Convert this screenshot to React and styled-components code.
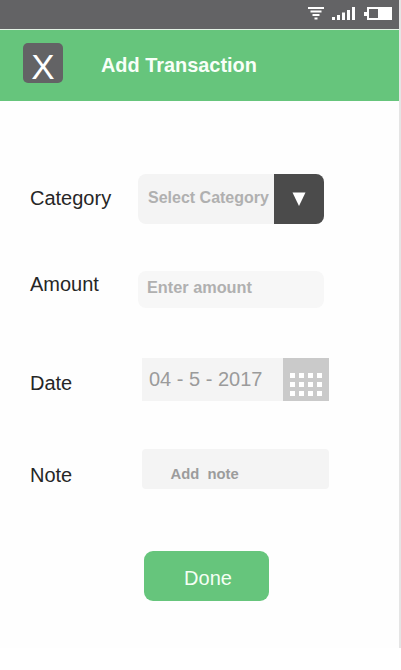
import React from "react";
import styled, { createGlobalStyle } from "styled-components";

const GlobalStyle = createGlobalStyle`
  * { box-sizing: border-box; }
  body { margin: 0; background: #fff; font-family: "Liberation Sans", Arial, sans-serif; }
  button, input { font: inherit; border: 0; padding: 0; margin: 0; }
`;

const Screen = styled.main`
  width: 401px;
  height: 648px;
  border-right: 2px solid #e5e5e5;
  background: #fefefe;
  overflow: hidden;
`;

const StatusBar = styled.div`
  height: 29px;
  background: #636365;
  display: flex;
  justify-content: flex-end;
  padding-right: 6px;
`;

const Header = styled.header`
  height: 72px;
  border-top: 1px solid #e4f3e6;
  background: #66c57c;
  display: flex;
  align-items: flex-start;
  padding: 13px 0 0 23px;
`;

const CloseButton = styled.button`
  width: 40px;
  height: 40px;
  border-radius: 5px;
  background: #636365;
  color: #fff;
  font-size: 35px;
  line-height: 47px;
  text-align: center;
`;

const Title = styled.h1`
  margin: 10px 0 0 38px;
  font-size: 19.9px;
  line-height: 24px;
  font-weight: bold;
  color: #f8fff8;
  white-space: nowrap;
`;

const Form = styled.form`
  padding: 73px 0 0 30px;
`;

const Row = styled.div`
  display: flex;
  align-items: flex-start;
  height: ${(p) => p.$height}px;
  margin-bottom: ${(p) => p.$gap}px;
`;

const Label = styled.label`
  width: ${(p) => p.$width || 112}px;
  padding-top: ${(p) => p.$top}px;
  font-size: 20px;
  line-height: 24px;
  color: #262626;
`;

const Field = styled.div`
  display: flex;
  width: ${(p) => p.$width}px;
  height: 100%;
  border-radius: ${(p) => p.$radius || 0}px;
  background: ${(p) => p.$bg || "#f4f4f4"};
  overflow: hidden;
`;

const Value = styled.span`
  flex: 1;
  min-width: 0;
  padding: ${(p) => p.$top}px 0 0 ${(p) => p.$left}px;
  font-size: ${(p) => p.$size || 16}px;
  font-weight: ${(p) => (p.$regular ? 400 : 700)};
  line-height: 20px;
  color: ${(p) => p.$color || "#b0b0b0"};
  white-space: pre;
`;

const DropButton = styled.button`
  width: 50px;
  background: #4b4b4b;
  display: flex;
  align-items: center;
  justify-content: center;
`;

const CalendarButton = styled.button`
  width: 46px;
  background: #cacaca;
  padding: 15px 0 0 7px;
  display: grid;
  grid-template-columns: repeat(4, 5px);
  grid-auto-rows: 5px;
  gap: 4px;
`;

const Day = styled.span`
  background: #fff;
`;

const DoneButton = styled.button`
  display: block;
  width: 125px;
  height: 50px;
  margin-left: 114px;
  padding: 5px 0 0 3px;
  border-radius: 9px;
  background: #66c57c;
  color: #f4fff4;
  font-size: 20px;
`;

function StatusIcons() {
  return (
    <svg width="86" height="29" viewBox="307 0 86 29" fill="#fff">
      <path d="M308 7h16v2h-16zM310.500 10.500h11v2h-11zM312.500 14h7v2h-7zM314.500 17.500h3v2h-3z" />
      <path d="M332 17h3v3h-3zM337 15h3v5h-3zM342 12.500h3v7.500h-3zM347 10h3v10h-3zM352 7h3v13h-3z" />
      <path fillRule="evenodd" d="M367 7h25v13h-25v-4h-3v-4h3zM369 9v9h9v-9z" />
    </svg>
  );
}

export default function App() {
  return (
    <>
      <GlobalStyle />
      <Screen>
        <StatusBar><StatusIcons /></StatusBar>
        <Header>
          <CloseButton aria-label="Close">X</CloseButton>
          <Title>Add Transaction</Title>
        </Header>
        <Form onSubmit={(e) => e.preventDefault()}>
          <Row $height={50} $gap={47}>
            <Label $top={12} $width={108}>Category</Label>
            <Field $width={186} $radius={8}>
              <Value $top={14} $left={10}>Select Category</Value>
              <DropButton type="button" aria-label="Open categories">
                <svg width="14" height="14" viewBox="0 0 14 14"><path d="M0.500 0.500h13L7 14z" fill="#fff" /></svg>
              </DropButton>
            </Field>
          </Row>
          <Row $height={37} $gap={50}>
            <Label $top={1} $width={108}>Amount</Label>
            <Field $width={186} $radius={8} $bg="#f7f7f7">
              <Value $top={6} $left={9} $size={16.3}>Enter amount</Value>
            </Field>
          </Row>
          <Row $height={43} $gap={48}>
            <Label $top={13}>Date</Label>
            <Field $width={187}>
              <Value $top={11} $left={7} $size={20} $color="#9b9b9b" $regular>04 - 5 - 2017</Value>
              <CalendarButton type="button" aria-label="Choose date">
                {Array.from({ length: 12 }, (_, i) => <Day key={i} />)}
              </CalendarButton>
            </Field>
          </Row>
          <Row $height={40} $gap={62}>
            <Label $top={14}>Note</Label>
            <Field $width={187} $radius={4}>
              <Value $top={15} $left={28.500} $size={14.8} $color="#9c9c9c">{"Add  note"}</Value>
            </Field>
          </Row>
          <DoneButton>Done</DoneButton>
        </Form>
      </Screen>
    </>
  );
}
